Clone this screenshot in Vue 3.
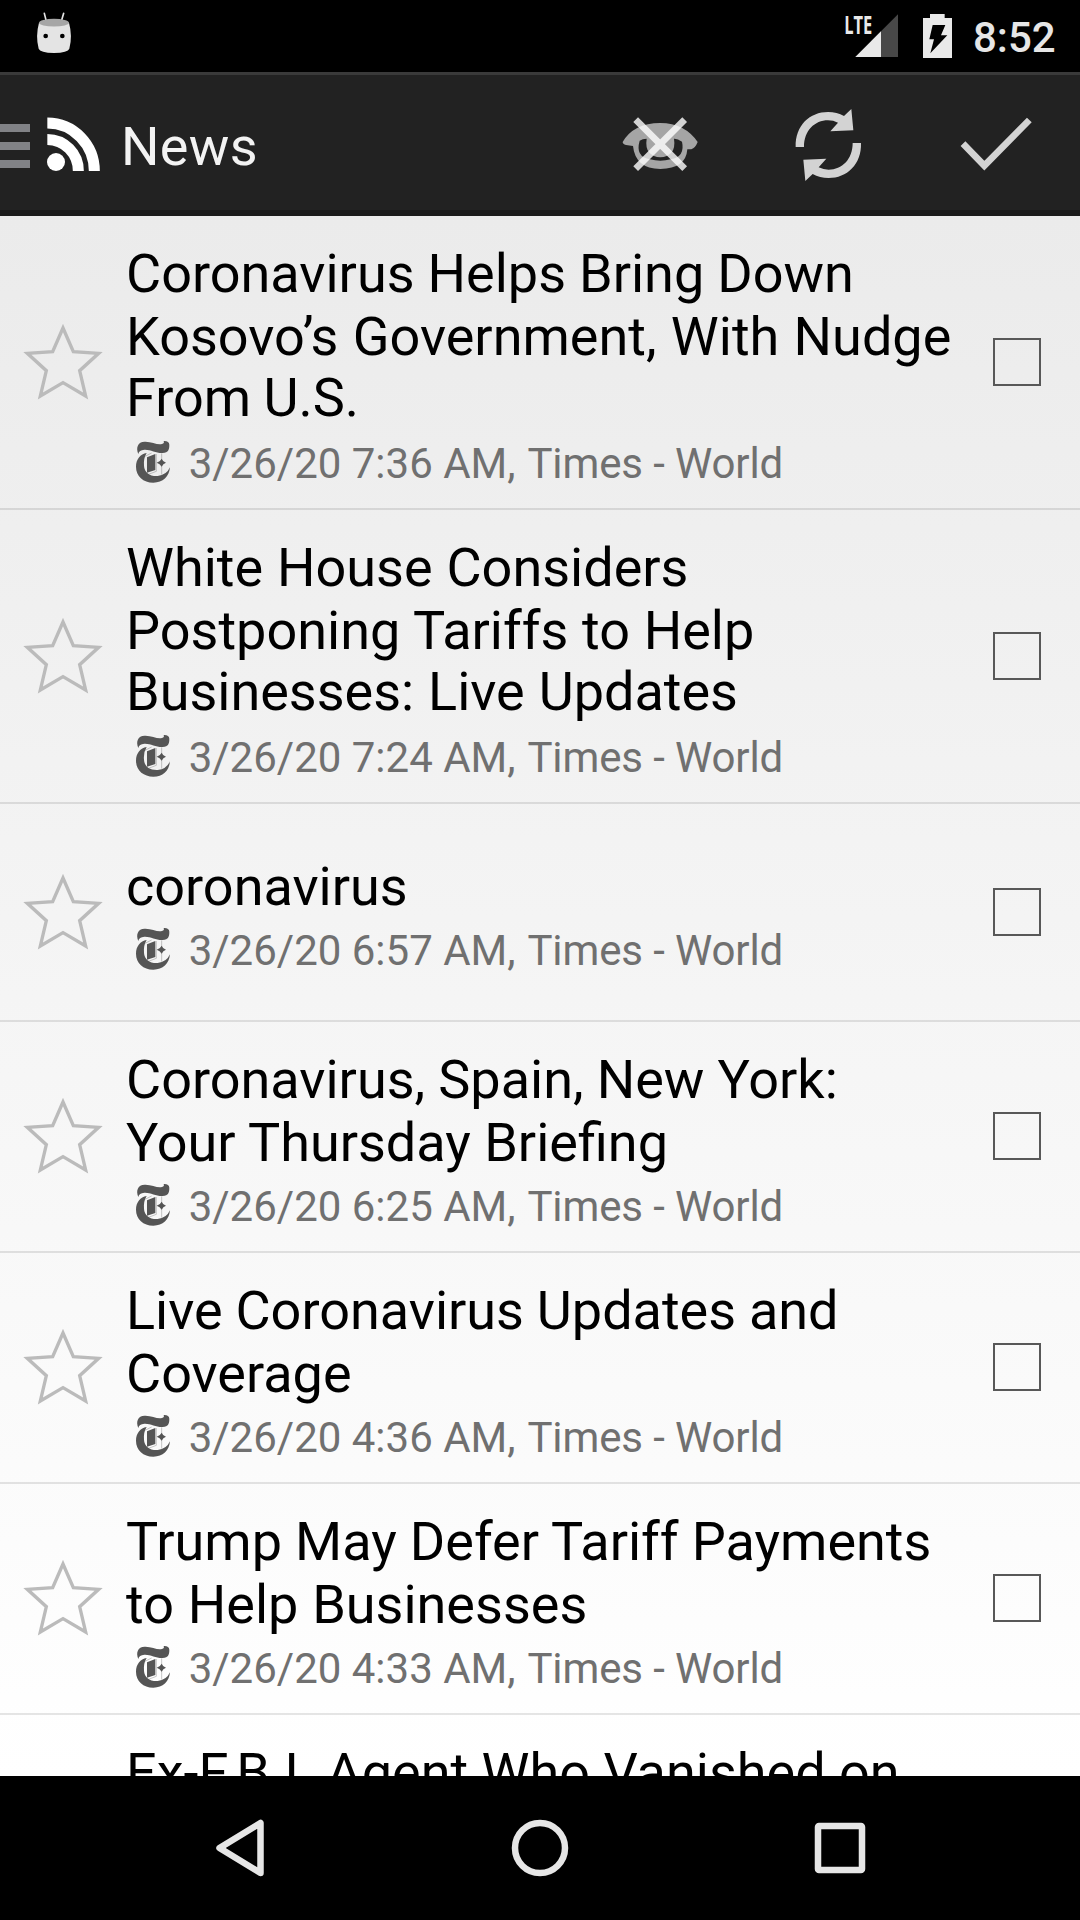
<script setup>
// gaps: word-spacing in px for each headline line
const articles = [
  { lines: ['Coronavirus Helps Bring Down', 'Kosovo’s Government, With Nudge', 'From U.S.'], gaps: [-0.4, 0.9, -1], time: '7:36' },
  { lines: ['White House Considers', 'Postponing Tariffs to Help', 'Businesses: Live Updates'], gaps: [0.5, 0.3, 0.5], time: '7:24' },
  { lines: ['coronavirus'], gaps: [0], time: '6:57' },
  { lines: ['Coronavirus, Spain, New York:', 'Your Thursday Briefing'], gaps: [-0.3, 0], time: '6:25' },
  { lines: ['Live Coronavirus Updates and', 'Coverage'], gaps: [-0.6, 0], time: '4:36' },
  { lines: ['Trump May Defer Tariff Payments', 'to Help Businesses'], gaps: [-0.3, 0.4], time: '4:33' },
  { lines: ['Ex-F.B.I. Agent Who Vanished on'], gaps: [0], time: '' },
]
</script>

<template>
  <div class="screen">
    <header class="status">
      <svg class="droid" viewBox="0 0 240 216">
        <path d="M133 40l6 24M191 40l-7 24" stroke="#e4e4e4" stroke-width="5" stroke-linecap="round" />
        <path d="M117 68Q162 88 207 68Q218 108 208 146Q204 158 162 159Q120 158 116 146Q106 108 117 68Z" fill="#e4e4e4" />
        <ellipse cx="162" cy="68" rx="45" ry="11.5" fill="#a6a6a6" />
        <circle cx="137" cy="108" r="7" /><circle cx="187" cy="108" r="7" />
      </svg>
      <svg class="indicators" viewBox="0 0 420 216">
        <path d="M234 43V171H106Z" fill="#484848" />
        <path d="M183 94V171H106Z" fill="#e9e9e9" />
        <text x="73" y="101" textLength="84" lengthAdjust="spacingAndGlyphs" class="lte">LTE</text>
        <path d="M330 42h44v12h22v120h-87V54h21z" fill="#e9e9e9" />
        <path d="M338 75h38l-13 31h19l-51 54 11-42h-14z" fill="#000" />
      </svg>
      <span class="clock">8:52</span>
    </header>

    <nav class="bar">
      <svg class="brand" viewBox="0 216 360 432">
        <path d="M0 372h90v24H0zM0 426h90v24H0zM0 480h90v24H0z" fill="#818286" />
        <g fill="none" stroke="#fff" stroke-width="33">
          <path d="M142 369A141 144 0 0 1 283 513" />
          <path d="M142 418.500A93 94.500 0 0 1 235 513" />
        </g>
        <circle cx="168" cy="486" r="27" fill="#fff" />
      </svg>
      <h1>News</h1>
      <svg class="action" viewBox="-72 -54 504 432">
        <path fill="#a5a5a5" fill-rule="evenodd" d="M68 156Q100 100 181 99Q255 100 293 156Q286 174 274 178L262 178Q258 236 181 237Q106 236 99 168L78 165Q68 162 68 156ZM119 152Q105 200 150 208Q181 216 212 208Q256 200 246 155Q232 145 222 146Q226 172 215 187Q202 202 181 202Q160 202 147 187Q136 172 140 146Q127 146 119 152Z" />
        <path d="M107 89L254 236M254 89L107 236" stroke="#fff" stroke-opacity=".8" stroke-width="20" />
      </svg>
      <svg class="action" viewBox="432 -54 504 432" fill="#d3d3d3">
        <path d="M587 171C585 106 630 66 684 66Q711 66 732 78L754 57L760 121L691 124L714 98Q700 91 684 91C644 91 612 122 612 171Z" />
        <path d="M587 171C585 106 630 66 684 66Q711 66 732 78L754 57L760 121L691 124L714 98Q700 91 684 91C644 91 612 122 612 171Z" transform="rotate(180 685 165)" />
      </svg>
      <svg class="action" viewBox="936 -54 504 432">
        <path d="M1089 161L1153 227L1288 90" fill="none" stroke="#d3d3d3" stroke-width="20" />
      </svg>
    </nav>

    <main class="list">
      <article v-for="a in articles" :key="a.lines[0]" class="row" :class="['n' + a.lines.length, { cut: !a.time }]">
        <svg class="star" viewBox="0 0 240 240">
          <path d="M120 18L151 89L227 94L170 146L188 222L120 182L52 222L70 146L13 94L89 89Z" />
        </svg>
        <div class="body">
          <p v-for="(line, i) in a.lines" :key="line" class="title" :style="{ wordSpacing: a.gaps[i] + 'px' }">{{ line }}</p>
          <div v-if="a.time" class="meta">
            <svg viewBox="405 655 110 135">
              <path d="M415 700C407 682 413 663 434 663C455 662 472 674 486 670Q494 668 491 661Q507 660 508 672C508 686 506 696 488 697C468 698 452 686 433 687Q417 688 415 700Z" />
              <path d="M440 697Q430 713 432 735C433 755 448 767 473 766Q500 763 510 740C507 769 489 786 460 786C430 786 408 767 408 738C408 716 421 700 440 697Z" />
              <path d="M441 710L466 700V748L441 756Z" />
              <path d="M470 726Q480 724 485 714Q489 724 498 726Q489 729 485 738Q480 729 470 726Z" />
              <path d="M435 707L455 697M485 698V762M469 700V752L443 762" fill="none" stroke="#555" stroke-width="1.500" opacity=".65" />
            </svg>
            <div class="info">3/26/20 {{ a.time }} AM, <span class="feed">Times - World</span></div>
          </div>
        </div>
        <i class="check"></i>
      </article>
    </main>

    <footer class="nav">
      <svg viewBox="0 0 1080 144" fill="none" stroke="#e6e6e6" stroke-width="6.500" stroke-linejoin="round">
        <path d="M260.500 47V97L219.500 72Z" />
        <circle cx="540" cy="72" r="25" />
        <rect x="818" y="50" width="44" height="44" rx="1" />
      </svg>
    </footer>
  </div>
</template>

<style>
body { margin: 0; background: #000; }
</style>

<style scoped>
.screen { width: 1080px; height: 1920px; display: flex; flex-direction: column; overflow: hidden; background: #000; font-family: Roboto, sans-serif; }
svg { display: block; flex: none; }
.status { height: 72px; display: flex; flex: none; }
.droid { width: 80px; height: 72px; }
.indicators { width: 140px; height: 72px; margin-left: auto; }
.lte { font: 700 75px "Open Sans", sans-serif; fill: #e9e9e9; }
.clock { width: 120px; padding-left: 13px; box-sizing: border-box; font-size: 42px; font-weight: 500; line-height: 75px; color: #e6e6e6; }
.bar { height: 144px; box-sizing: border-box; flex: none; display: flex; background: linear-gradient(#3a3a3a 3px, #222 3px, #222 138px, #1b1b1b 138px); }
.brand { width: 120px; height: 144px; }
h1 { margin: 0 auto 0 1px; font-size: 54px; font-weight: 400; line-height: 150px; letter-spacing: .3px; color: #f3f3f3; }
.action { width: 168px; height: 144px; }
.list { height: 1560px; flex: none; overflow: hidden; background: linear-gradient(#ebebeb, #fff); }
.row { box-sizing: border-box; height: 231px; border-bottom: 2px solid rgba(0, 0, 0, .1); display: flex; align-items: center; }
.n3 { height: 294px; }
.n1 { height: 218px; }
.n2 .star, .n2 .check { margin-bottom: 1px; }
.star { width: 80px; height: 80px; margin-left: 23px; fill: none; stroke: #bbb; stroke-width: 10; }
.body { margin-left: 23px; width: 840px; align-self: flex-start; padding-top: 26px; }
.n1 .body { padding-top: 51px; }
.cut .body { padding-top: 26px; }
.cut .star, .cut .check { visibility: hidden; }
.title { margin: 0; height: 63px; font-size: 54px; line-height: 63px; white-space: nowrap; color: #000; }
.n3 .title:nth-child(3) { line-height: 60px; }
.meta { display: flex; margin-top: 8px; height: 49px; }
.meta svg { width: 36.670px; height: 45px; margin: 0 17px 0 9px; fill: #555; }
.info { font-size: 42px; line-height: 49px; color: #707070; white-space: nowrap; }
.feed { margin-left: 1.500px; letter-spacing: -.12px; }
.check { margin-left: 27px; width: 44px; height: 44px; border: 2px solid #585858; flex: none; }
.nav { height: 144px; flex: none; }
</style>
